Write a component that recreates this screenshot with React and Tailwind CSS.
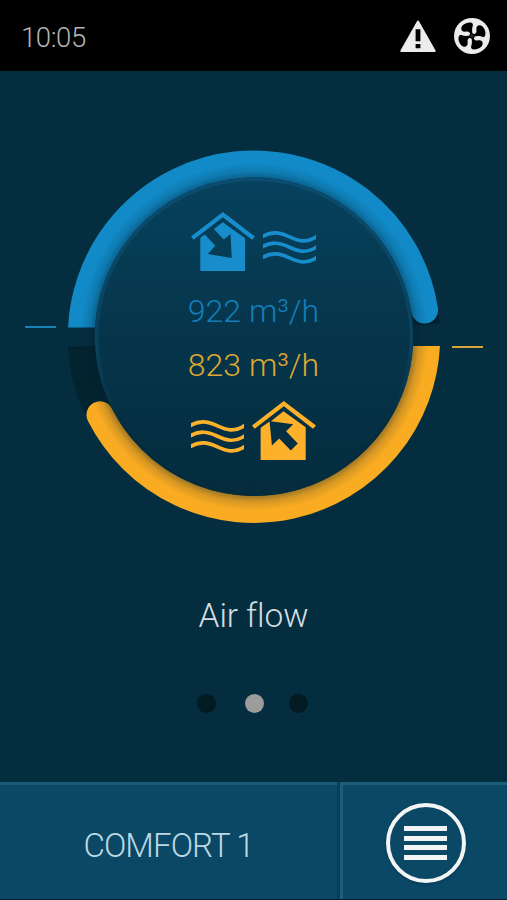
import clsx from 'clsx';

const CX = 254;
const CY = 336.7;
const R = 172.7;

function WarningIcon() {
  return (
    <svg viewBox="0 0 36 33" className="w-9 h-[33px]">
      <path d="M18 1.5 L34.7 31 H1.3 Z" fill="#ececec" stroke="#ececec" strokeWidth="2" strokeLinejoin="round" />
      <path d="M15.6 9.3h4.8v12h-4.8zM15.6 24h4.8v4.2h-4.8z" fill="#000" />
    </svg>
  );
}

function FanIcon() {
  return (
    <svg viewBox="-54 -54 108 108" className="size-9">
      <circle r="54" fill="#ececec" />
      {[0, 90, 180, 270].map((angle) => (
        <path
          key={angle}
          transform={`rotate(${angle})`}
          d="M-5 3 L-6 -8 C-9 -14 -15 -14 -21 -13 C-33 -12 -36 -25 -27 -33 C-18 -41 -2 -43 2 -37 C5 -31 -3 -26 2 -4 Z"
          fill="#000"
        />
      ))}
      <circle r="8" fill="#000" />
      <path d="M-5 0h10M0 -5v10" stroke="#555" strokeWidth="2" />
    </svg>
  );
}

function WavesIcon() {
  return (
    <svg viewBox="0 0 159 105" className="w-[53px] h-[35px] overflow-hidden" fill="none" stroke="currentColor" strokeWidth="11">
      {[19, 50, 82].map((y) => (
        <path key={y} d={`M-6 ${y + 3} C24 ${y - 17} 50 ${y - 12} 78 ${y + 1} S130 ${y + 23} 165 ${y - 2}`} />
      ))}
    </svg>
  );
}

function HouseIcon({ direction }) {
  return (
    <svg viewBox="0 0 193 178" className="w-16 h-[59px]" fill="currentColor">
      <path d="M96 0 L193 74 L184 84 L96 16 L8 84 L0 74 Z" />
      {direction === 'in' ? (
        <path d="M28 178 V78 L42 68 L73 102 L51 127 L123 139 L119 66 L99 83 L69 51 L96 31 L163 79 V178 Z" />
      ) : (
        <path d="M26 178 V81 L53 62 L60 134 L82 113 L117 149 L138 128 L103 91 L124 70 L57 61 L95 31 L162 79 V178 Z" />
      )}
    </svg>
  );
}

function point(deg) {
  const a = (deg * Math.PI) / 180;
  return `${CX + R * Math.cos(a)} ${CY + R * Math.sin(a)}`;
}

// clockwise arc, degrees counted from three o'clock
function arc(from, to) {
  return `M${point(from)} A${R} ${R} 0 ${to - from > 180 ? 1 : 0} 1 ${point(to)}`;
}

function DialRing() {
  return (
    <svg viewBox="68 150 372 374" className="absolute inset-0 w-full h-full">
      <defs>
        <linearGradient id="disc" x1="0" y1="0" x2="0" y2="1">
          <stop offset="0" stopColor="#06415d" />
          <stop offset="0.5" stopColor="#06354b" />
          <stop offset="1" stopColor="#042c3d" />
        </linearGradient>
        <linearGradient id="rim" x1="0" y1="0" x2="0" y2="1">
          <stop offset="0" stopColor="#0a4d70" />
          <stop offset="0.55" stopColor="#0a415b" />
          <stop offset="0.8" stopColor="#042c3d" />
        </linearGradient>
        <radialGradient id="shade" gradientUnits="userSpaceOnUse" cx={CX} cy={CY} r="174">
          <stop offset="0.91" stopColor="#001c2b" stopOpacity="0.4" />
          <stop offset="0.95" stopColor="#001c2b" stopOpacity="0.14" />
          <stop offset="1" stopColor="#001c2b" stopOpacity="0" />
        </radialGradient>
        <clipPath id="upper">
          <rect x="60" y="140" width="390" height="187.5" />
        </clipPath>
        <clipPath id="lower">
          <rect x="60" y="346" width="390" height="190" />
        </clipPath>
      </defs>
      <g fill="none" strokeWidth="27">
        <path d={arc(-12, -4)} stroke="#02222f" />
        <path d={arc(150, 176.6)} stroke="#01242f" />
        <path d={arc(178, 351.1)} stroke="#118ac7" strokeLinecap="round" clipPath="url(#upper)" />
        <path d={arc(2, 153.1)} stroke="#f9ab22" strokeLinecap="round" clipPath="url(#lower)" />
      </g>
      <path d="M68 347.5h28" stroke="#021f2b" strokeWidth="1.5" />
      <circle cx={CX} cy={CY} r="174" fill="url(#shade)" />
      <circle cx={CX} cy={CY} r="157.5" fill="url(#disc)" stroke="url(#rim)" strokeWidth="3.4" />
    </svg>
  );
}

function Flow({ value, className }) {
  return <p className={clsx('text-[32px] leading-[54px] font-light whitespace-pre', className)}>{value} m³/h</p>;
}

export default function App() {
  return (
    <div className="w-[507px] h-[900px] flex flex-col overflow-hidden bg-[#042e3f] font-['Roboto',sans-serif]">
      {/* Status bar */}
      <header className="h-[71px] shrink-0 bg-black flex items-center justify-between pl-[21px] pr-[17px] pt-px">
        <span className="text-[27.5px] leading-8 font-light text-[#b4b4b4] pt-1 tracking-[-0.4px]">10:05</span>
        <div className="flex items-center gap-[18px]">
          <WarningIcon />
          <FanIcon />
        </div>
      </header>

      {/* Dial */}
      <main className="grow flex flex-col items-center">
        <div className="w-full mt-[79px] flex justify-between pl-[25px] pr-6">
          <div className="w-[31px] h-0.5 mt-[176px] bg-[#1583b4]" />
          <div className="relative w-[372px] h-[374px] -mx-5">
            <DialRing />
            <div className="relative flex flex-col items-center pt-[62px] pr-px">
              <div className="flex items-start gap-2 text-[#178dcb]">
                <HouseIcon direction="in" />
                <div className="pt-[18px]">
                  <WavesIcon />
                </div>
              </div>
              <Flow value={922} className="mt-[13px] text-[#127eb8]" />
              <Flow value={823} className="text-[#dba831]" />
              <div className="mt-[9px] flex items-start gap-2 text-[#fdb12b]">
                <div className="pt-[18px]">
                  <WavesIcon />
                </div>
                <HouseIcon direction="out" />
              </div>
            </div>
          </div>
          <div className="w-[31px] h-0.5 mt-[196px] bg-[#d9a638]" />
        </div>

        <h1 className="mt-[72px] text-[33.5px] leading-10 font-light text-[#d3dde2] tracking-[-0.1px]">Air flow</h1>
        <div className="mt-[58px] flex items-center -ml-[2px]">
          <span className="size-[19px] rounded-full bg-[#021a22] mr-[29px]" />
          <span className="size-[19px] rounded-full bg-[#9c9c9c] mr-[25px]" />
          <span className="size-[19px] rounded-full bg-[#021a22]" />
        </div>
      </main>

      {/* Bottom bar */}
      <footer className="h-[118px] shrink-0 flex gap-[3px] bg-[#083f59] border-b border-[#03202d]">
        <button className="w-[337px] h-full border-t-[3px] border-[#175b77] bg-[#0a4865] text-[33px] font-light tracking-[-0.9px] text-[#bcd8e3] pt-2">
          COMFORT 1
        </button>
        <button className="grow h-full border-t-[3px] border-l-[3px] border-[#1b5e7a] bg-[#0a4865] flex items-center justify-center pt-0.5 pl-px">
          <span className="size-20 rounded-full border-4 border-[#f2f4f5] flex flex-col items-center justify-center gap-[4.7px] shadow-[0_1px_3px_#06384f]">
            {[0, 1, 2, 3].map((i) => (
              <span key={i} className="w-[43px] h-[5px] bg-[#f2f4f5]" />
            ))}
          </span>
        </button>
      </footer>
    </div>
  );
}
